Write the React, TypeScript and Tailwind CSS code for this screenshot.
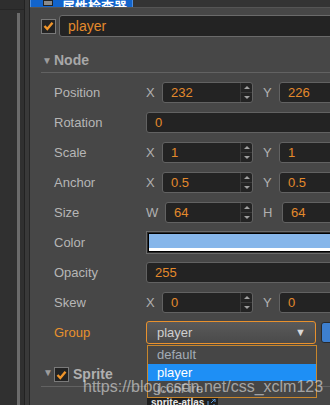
import React from 'react';

const font = { fontFamily: '"Liberation Sans", "Noto Sans CJK SC", sans-serif' };

function Spinner() {
  return (
    <div className="flex flex-col w-[12px] h-full border-l border-[#3a3a3a]">
      <div className="flex-1 flex items-center justify-center border-b border-[#3a3a3a]">
        <div className="w-0 h-0 border-l-[3px] border-r-[3px] border-b-[3px] border-l-transparent border-r-transparent border-b-[#a0a0a0]" />
      </div>
      <div className="flex-1 flex items-center justify-center">
        <div className="w-0 h-0 border-l-[3px] border-r-[3px] border-t-[3px] border-l-transparent border-r-transparent border-t-[#a0a0a0]" />
      </div>
    </div>
  );
}

function NumInput({ value, spinner }: { value: string; spinner?: boolean }) {
  return (
    <div className="flex-1 h-[21px] flex items-stretch bg-[#232323] border border-[#626262] rounded-[3px] overflow-hidden">
      <span className="flex-1 flex items-center pl-[8px] text-[13px] text-[#e38a2c]">{value}</span>
      {spinner && <Spinner />}
    </div>
  );
}

function Half({ axis, value, wide }: { axis: string; value: string; wide?: boolean }) {
  return (
    <div className="w-[107px] shrink-0 flex items-center">
      <span className={`${wide ? 'w-[19px]' : 'w-[16px]'} text-[13px] text-[#b0b0b0]`}>{axis}</span>
      <NumInput value={value} spinner />
    </div>
  );
}

function Row({ label, children, orange }: { label: string; children: React.ReactNode; orange?: boolean }) {
  return (
    <div className="h-[30px] flex items-center pl-[24px] pt-[1px]">
      <span className={`w-[92px] shrink-0 text-[13px] ${orange ? 'text-[#e8912d]' : 'text-[#b6b6b6]'}`}>{label}</span>
      <div className="flex items-center gap-[10px] w-[300px] shrink-0">{children}</div>
    </div>
  );
}

function Vec({ a, b, va, vb, wide }: { a: string; b: string; va: string; vb: string; wide?: boolean }) {
  return (
    <>
      <Half axis={a} value={va} wide={wide} />
      <Half axis={b} value={vb} wide={wide} />
    </>
  );
}

function Check() {
  return (
    <div className="w-[15px] h-[15px] shrink-0 bg-[#232323] border border-[#7a7a7a] flex items-center justify-center">
      <svg width="11" height="10" viewBox="0 0 11 10">
        <path d="M1.5 5 L4.3 8 L9.5 1.8" fill="none" stroke="#f0952a" strokeWidth="2.4" />
      </svg>
    </div>
  );
}

export default function App() {
  return (
    <div className="w-[330px] h-[405px] overflow-hidden flex bg-[#303030]" style={font}>
      {/* left panel */}
      <div className="w-[24px] shrink-0 flex flex-col">
        <div className="h-[10px] bg-[#2e2e2e] border-b border-[#262626]" />
        <div className="flex-1 flex pt-[3px]">
          <div className="w-[17px]" />
          <div className="w-[3px] bg-[#6b6b6b]" />
        </div>
      </div>
      <div className="w-[1px] shrink-0 bg-[#222]" />
      <div className="w-[4px] shrink-0 bg-[#393939]" />
      <div className="w-[1px] shrink-0 bg-[#262626]" />

      {/* inspector */}
      <div className="relative flex-1 bg-[#474747] overflow-hidden">
        <div className="h-[8px] flex bg-[#343434] border-b border-[#555]">
          <div className="w-[103px] h-[7px] bg-[#1264cc] border-x border-[#4d8fe0] flex items-end overflow-hidden pl-[12px] gap-[9px]">
            <div className="w-[10px] h-[6px] mb-[1px] border border-[#222] bg-[#8a8a8a] shrink-0" />
            <span className="text-[13px] leading-[13px] font-bold text-white whitespace-nowrap translate-y-[6px]">属性检查器</span>
          </div>
        </div>
        <div className="h-[7px]" />
        <div className="h-[22px] flex items-center pl-[11px]">
          <Check />
          <div className="ml-[3px] w-[300px] shrink-0 h-[22px] bg-[#232323] border border-[#6a6a6a] rounded-[3px] flex items-center pl-[8px] text-[14px] text-[#e38a2c]">
            player
          </div>
        </div>

        <div className="ml-[11px] h-[36px] border-b border-[#626262] flex items-end pb-[4px]">
          <span className="text-[10px] text-[#9c9c9c] w-[13px] pl-[1px]">▼</span>
          <span className="text-[14px] leading-[16px] font-bold text-[#a8a8a8]">Node</span>
        </div>

        <div className="pt-[4px]">
          <Row label="Position"><Vec a="X" b="Y" va="232" vb="226" /></Row>
          <Row label="Rotation"><NumInput value="0" /></Row>
          <Row label="Scale"><Vec a="X" b="Y" va="1" vb="1" /></Row>
          <Row label="Anchor"><Vec a="X" b="Y" va="0.5" vb="0.5" /></Row>
          <Row label="Size"><Vec a="W" b="H" va="64" vb="64" wide /></Row>
          <Row label="Color">
            <div className="flex-1 h-[23px] border border-[#6a6a6a] p-[1px] bg-[#2a2a2a]">
              <div className="h-full border border-black flex flex-col">
                <div className="flex-1 bg-[#86b6ea]" />
                <div className="h-[3px] bg-white" />
              </div>
            </div>
          </Row>
          <Row label="Opacity"><NumInput value="255" /></Row>
          <Row label="Skew"><Vec a="X" b="Y" va="0" vb="0" /></Row>
          <Row label="Group" orange>
            <div className="w-[170px] shrink-0 h-[23px] rounded-[3px] border border-[#e8912d] bg-gradient-to-b from-[#5a5a5a] to-[#4a4a4a] flex items-center justify-between pl-[10px] pr-[9px] -mr-[5px]">
              <span className="text-[13px] text-[#cfcfcf]">player</span>
              <span className="text-[11px] text-[#d8d8d8]">▼</span>
            </div>
            <div className="w-[60px] shrink-0 h-[21px] rounded-[3px] bg-[#3d7fcf] border border-[#2a2a2a]" />
          </Row>
        </div>

        <div className="ml-[11px] h-[40px] border-b border-[#626262] flex items-end pb-[4px]">
          <span className="text-[10px] text-[#9c9c9c] w-[13px] pl-[2px] mb-[2px]">▼</span>
          <Check />
          <span className="ml-[4px] text-[14px] leading-[16px] font-bold text-[#b0b0b0]">Sprite</span>
        </div>

        {/* open group list */}
        <div className="absolute left-[117px] top-[345px] w-[170px] h-[53px] bg-[#464646] border border-[#c8862c] flex flex-col text-[13px]">
          <div className="h-[18px] flex items-center pl-[9px] text-[#a3acb6]">default</div>
          <div className="h-[17px] flex items-center pl-[9px] bg-[#1e8ff5] text-white">player</div>
          <div className="h-[16px] flex items-center pl-[9px] text-[#a0a0a0]">iconFire</div>
        </div>

        <div className="absolute left-[117px] top-[398px] w-[71px] h-[9px] bg-[#1e1e1e] flex items-start pl-[4px] gap-[3px] overflow-hidden">
          <span className="text-[10px] leading-[10px] font-bold text-[#e8e8e8] whitespace-nowrap">sprite-atlas</span>
          <svg width="9" height="8" viewBox="0 0 9 8" className="mt-[1px] shrink-0">
            <path d="M1 2 V7 H7 V5 M4 4 L8 0 M5 0 H8 V3" fill="none" stroke="#5b9be0" strokeWidth="1" />
          </svg>
        </div>

        {/* watermark */}
        <div className="absolute left-[53px] top-[378px] text-[16px] leading-[18px] text-[rgba(225,225,225,0.62)] whitespace-nowrap">
          https://blog.csdn.net/css_xclm123
        </div>
      </div>
    </div>
  );
}
